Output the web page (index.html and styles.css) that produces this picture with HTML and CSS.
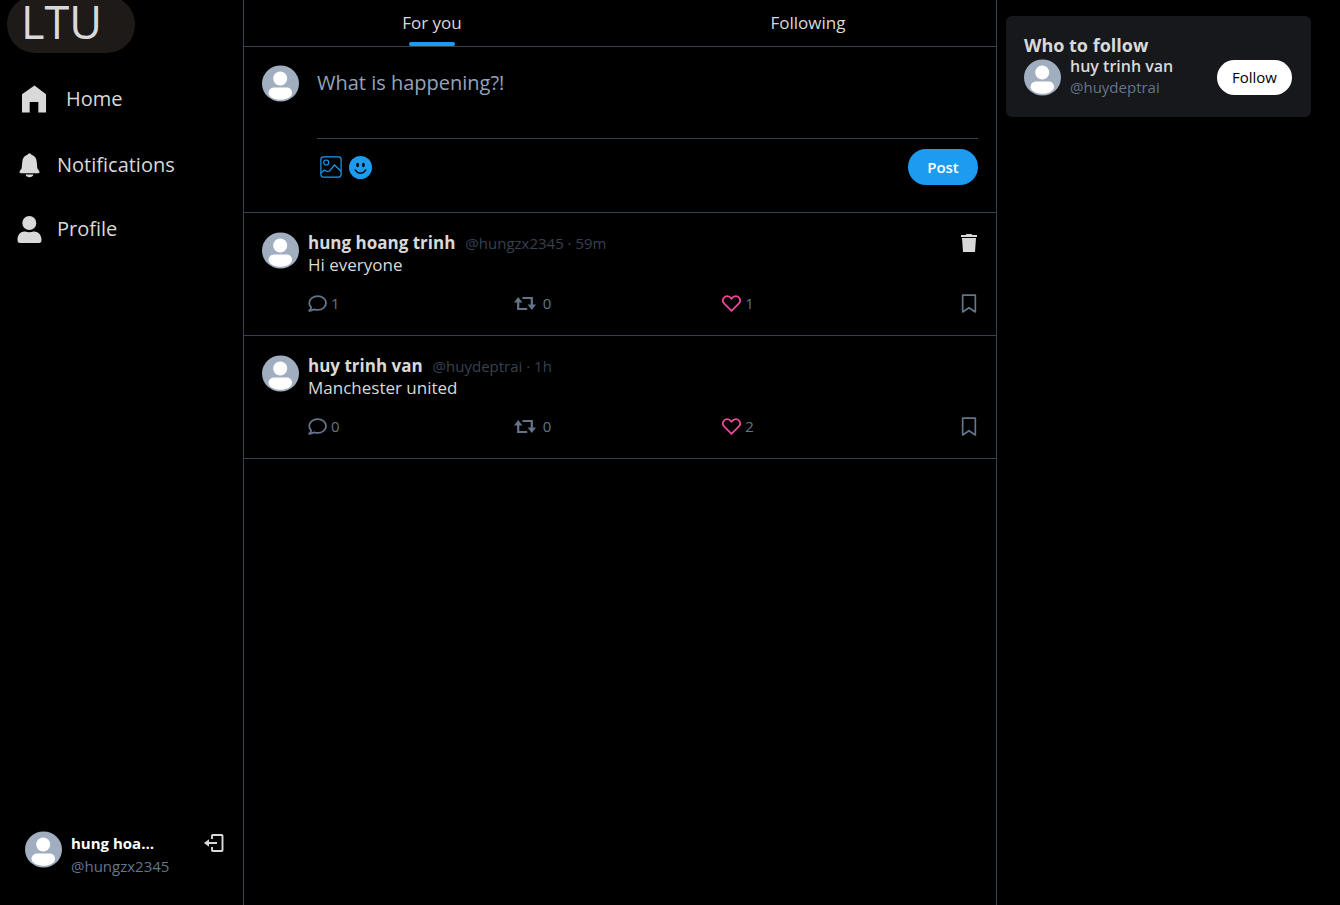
FILE: index.html
```html
<!DOCTYPE html>
<html lang="en">
<head>
<meta charset="utf-8">
<title>LTU</title>
<meta name="viewport" content="width=device-width, initial-scale=1">
<link rel="stylesheet" href="styles.css">
</head>
<body>
<svg class="sprite" aria-hidden="true">
  <symbol id="avatar" viewBox="0 0 37 36">
    <ellipse cx="18.5" cy="18" rx="18.5" ry="18" fill="#a0aec0"/>
    <circle cx="18.2" cy="13" r="7" fill="#fff"/>
    <path d="M13 22h11c4 0 6 2 6 5.500c0 4-6 6.800-11.500 6.800S6.500 31.500 6.500 27.500C6.500 24 9 22 13 22z" fill="#fff"/>
  </symbol>
  <symbol id="comment" viewBox="0 0 18 16">
    <path d="M9.200 1C4.800 1 1.200 3.900 1.200 7.500c0 1.600.7 3 1.800 4.100-.2 1.200-.9 2.400-1.900 3.400 1.800 0 3.400-.6 4.600-1.500 1.100.4 2.200.6 3.500.6 4.400 0 7.900-3 7.900-6.600S13.600 1 9.200 1z" fill="none" stroke="currentColor" stroke-width="1.700" stroke-linejoin="round"/>
  </symbol>
  <symbol id="repost" viewBox="0 0 22 15">
    <path d="M4.200 5v8h9M8.500 2h9.300v8" fill="none" stroke="currentColor" stroke-width="2.200"/>
    <path d="M0 6.500 4.200 1l4.200 5.500zM13.600 8.500H22L17.800 14z" fill="currentColor"/>
  </symbol>
  <symbol id="heart" viewBox="0 0 18 16">
    <path d="M9 15 2.200 8.200C.6 6.500.5 4 2 2.300s4.300-1.600 5.800 0L9 3.500l1.200-1.200c1.500-1.600 4.300-1.700 5.800 0s1.400 4.200-.2 5.900z" fill="none" stroke="currentColor" stroke-width="1.700" stroke-linejoin="round"/>
  </symbol>
  <symbol id="bookmark" viewBox="0 0 14 18">
    <path d="M1 1h12v16l-6-4-6 4z" fill="none" stroke="currentColor" stroke-width="1.600" stroke-linejoin="round"/>
  </symbol>
</svg>
<div class="app">
  <aside class="sidebar">
    <a class="brand" href="#">LTU</a>
    <nav class="menu">
      <a class="menu-item menu-home" href="#">
        <svg class="icon-home" viewBox="0 0 26 28"><path d="M13 0 25 9v19h-8V17H8v11H0V9z" fill="currentColor"/></svg>
        Home
      </a>
      <a class="menu-item" href="#">
        <svg class="icon-menu" viewBox="0 0 25 26"><path d="M12.500 1c1 0 1.700.5 2 1.300 3.200 1 5 3.600 5.200 7l.6 6.200c.2 1.500 2.200 2.700 2.200 4 0 .8-.5 1.200-1.300 1.200H3.800c-.8 0-1.300-.4-1.300-1.200 0-1.300 2-2.500 2.200-4l.6-6.200c.2-3.400 2-6 5.200-7 .3-.8 1-1.300 2-1.300zM8.500 22h8c-.5 1.700-2 2.800-4 2.800S9 23.700 8.500 22z" fill="currentColor"/></svg>
        Notifications
      </a>
      <a class="menu-item" href="#">
        <svg class="icon-menu" viewBox="0 0 25 27"><circle cx="12.300" cy="7" r="7" fill="currentColor"/><path d="M8 15.500c2.500 1 6 1 8.500 0 5-.3 8 3.500 8 8.500 0 2-.8 3-2.500 3H3c-1.700 0-2.500-1-2.500-3 0-5 2.500-8.800 7.500-8.500z" fill="currentColor"/></svg>
        Profile
      </a>
    </nav>
    <div class="account">
      <svg class="avatar"><use href="#avatar"/></svg>
      <div class="account-text">
        <strong class="account-name">hung hoang trinh</strong>
        <span class="handle">@hungzx2345</span>
      </div>
      <button class="icon-button" aria-label="Log out">
        <svg class="icon-logout" viewBox="0 0 20 18"><path d="M8 5V1.800Q8 1 8.800 1h8.900q.8 0 .8.800v14.400q0 .8-.8.800H8.800Q8 17 8 16.200V13M1.500 9H13" fill="none" stroke="currentColor" stroke-width="1.900"/><path d="M0 9l5-3.800v7.600z" fill="currentColor"/></svg>
      </button>
    </div>
  </aside>

  <main class="feed">
    <div class="tabs">
      <button class="tab tab-active">For you</button>
      <button class="tab">Following</button>
    </div>
    <form class="composer">
      <svg class="avatar"><use href="#avatar"/></svg>
      <div class="composer-body">
        <textarea class="composer-input" aria-label="Post text" placeholder="What is happening?!"></textarea>
        <div class="composer-tools">
          <button class="icon-button tool" type="button" aria-label="Add image">
            <svg class="icon-image" viewBox="0 0 22 22"><g fill="none" stroke="currentColor" stroke-width="1.200"><rect x=".9" y=".9" width="20.200" height="20.200" rx="2.500"/><circle cx="6.200" cy="6.500" r="2.500"/><path d="M1 17l3.300-3 2.500 1.500 2.600-.3L14.500 9l6.500 6.200"/></g></svg>
          </button>
          <button class="icon-button tool" type="button" aria-label="Add emoji">
            <svg class="icon-emoji" viewBox="0 0 23 23"><circle cx="11.500" cy="11.500" r="11.500" fill="currentColor"/><g fill="#000"><ellipse cx="8.600" cy="9" rx="1.400" ry="2.200"/><ellipse cx="14.400" cy="9" rx="1.400" ry="2.200"/></g><path d="M6.300 14c2.400 4.200 8 4.200 10.400 0" fill="none" stroke="#000" stroke-width="1.500" stroke-linecap="round"/></svg>
          </button>
          <button class="post-button" type="button">Post</button>
        </div>
      </div>
    </form>

    <article class="post">
      <svg class="avatar"><use href="#avatar"/></svg>
      <div class="post-body">
        <header class="post-head">
          <strong class="name">hung hoang trinh</strong>
          <span class="meta">@hungzx2345 · 59m</span>
          <button class="icon-button trash" aria-label="Delete post">
            <svg class="icon-trash" viewBox="0 0 16 18"><path d="M5.500 0h5l.8 1H16v2H0V1h4.700zM1 4h14l-1 14H2z" fill="currentColor"/></svg>
          </button>
        </header>
        <p class="post-text">Hi everyone</p>
        <div class="actions">
          <button class="action"><svg class="icon-small"><use href="#comment"/></svg>1</button>
          <button class="action action-repost"><svg class="icon-repost"><use href="#repost"/></svg>0</button>
          <button class="action"><svg class="icon-small liked"><use href="#heart"/></svg>1</button>
          <button class="action" aria-label="Bookmark"><svg class="icon-bookmark"><use href="#bookmark"/></svg></button>
        </div>
      </div>
    </article>

    <article class="post">
      <svg class="avatar"><use href="#avatar"/></svg>
      <div class="post-body">
        <header class="post-head">
          <strong class="name">huy trinh van</strong>
          <span class="meta">@huydeptrai · 1h</span>
        </header>
        <p class="post-text">Manchester united</p>
        <div class="actions">
          <button class="action"><svg class="icon-small"><use href="#comment"/></svg>0</button>
          <button class="action action-repost"><svg class="icon-repost"><use href="#repost"/></svg>0</button>
          <button class="action"><svg class="icon-small liked"><use href="#heart"/></svg>2</button>
          <button class="action" aria-label="Bookmark"><svg class="icon-bookmark"><use href="#bookmark"/></svg></button>
        </div>
      </div>
    </article>
  </main>

  <aside class="aside">
    <section class="suggest">
      <h2 class="suggest-title">Who to follow</h2>
      <div class="suggest-row">
        <svg class="avatar"><use href="#avatar"/></svg>
        <div class="suggest-text">
          <strong class="suggest-name">huy trinh van</strong>
          <span class="handle">@huydeptrai</span>
        </div>
        <button class="follow-button">Follow</button>
      </div>
    </section>
  </aside>
</div>
</body>
</html>
```
FILE: styles.css
```css
* { box-sizing: border-box; }

body {
  margin: 0;
  background: #000;
  color: #d9d9d9;
  font-family: "Segoe UI", "Open Sans", "Noto Sans", sans-serif;
  font-size: 17px;
  line-height: 22px;
}

a { color: inherit; text-decoration: none; }
svg { display: block; flex: none; }

button {
  margin: 0;
  padding: 0;
  border: 0;
  background: none;
  color: inherit;
  font: inherit;
  cursor: pointer;
}

.sprite { position: absolute; width: 0; height: 0; }

.app {
  display: grid;
  grid-template-columns: 243fr 754fr 343fr;
  min-height: 100vh;
}

.sidebar {
  display: flex;
  flex-direction: column;
  align-items: flex-start;
  min-width: 0;
  padding-bottom: 28px;
}

.brand {
  width: 128px;
  height: 57px;
  margin: -4px 0 0 7px;
  padding-left: 14px;
  border-radius: 28px;
  background: #1d1a17;
  font-size: 45px;
  line-height: 52px;
}

.menu {
  display: flex;
  flex-direction: column;
  gap: 36px;
  margin-top: 32px;
  padding-left: 17px;
}

.menu-item {
  display: flex;
  align-items: center;
  gap: 15px;
  height: 28px;
  font-size: 20px;
}

.menu-home { gap: 19px; margin-bottom: 2px; padding-left: 5px; }
.icon-home { width: 25px; height: 28px; }
.icon-menu { width: 25px; height: 27px; }

.account {
  display: flex;
  align-items: flex-start;
  gap: 9px;
  width: 100%;
  margin-top: auto;
  padding: 0 19px 0 25px;
}

.avatar { width: 37px; height: 37px; }

.account-text {
  display: flex;
  flex: 1;
  flex-direction: column;
  min-width: 0;
}

.account-name {
  max-width: 92px;
  overflow: hidden;
  color: #fff;
  font-size: 15px;
  line-height: 24px;
  text-overflow: ellipsis;
  white-space: nowrap;
}

.handle { color: #64748b; font-size: 15px; }

.icon-logout { width: 20px; height: 18px; margin-top: 3px; }

.feed {
  min-width: 0;
  border-right: 1px solid #374151;
  border-left: 1px solid #374151;
}

.tabs {
  display: grid;
  grid-template-columns: 1fr 1fr;
  border-bottom: 1px solid #374151;
}

.tab {
  display: grid;
  justify-items: center;
  height: 46px;
  padding-top: 12px;
  align-content: space-between;
}

.tab-active::after {
  width: 46px;
  height: 4px;
  border-radius: 2px;
  background: #1d9bf0;
  content: "";
}

.composer {
  display: flex;
  gap: 18px;
  padding: 18px 18px 27px;
  border-bottom: 1px solid #374151;
}

.composer-body { flex: 1; min-width: 0; }

.composer-input {
  display: block;
  width: 100%;
  height: 74px;
  padding: 4px 0;
  border: 0;
  border-bottom: 1px solid #374151;
  outline: 0;
  background: transparent;
  color: #d9d9d9;
  font: 20px/28px "Segoe UI", "Open Sans", "Noto Sans", sans-serif;
  resize: none;
}

.composer-input::placeholder { color: #94a3b8; opacity: 1; }

.composer-tools {
  display: flex;
  align-items: center;
  gap: 7px;
  margin-top: 10px;
  padding-left: 3px;
}

.tool { color: #1d9bf0; }
.icon-image { width: 22px; height: 22px; }
.icon-emoji { width: 23px; height: 23px; }

.post-button {
  width: 70px;
  height: 36px;
  margin-left: auto;
  border-radius: 18px;
  background: #1d9bf0;
  color: #fff;
  font-size: 15px;
  font-weight: 600;
}

.post {
  display: flex;
  gap: 9px;
  padding: 19px 18px 21px;
  border-bottom: 1px solid #374151;
}

.post-body { flex: 1; min-width: 0; }

.post-head {
  display: flex;
  align-items: center;
  gap: 10px;
  height: 22px;
}

.name { font-weight: 700; }
.meta { color: #374151; font-size: 15px; }
.trash { margin-left: auto; }
.icon-trash { width: 18px; height: 18px; }
.post-text { margin: 0; }

.actions {
  display: grid;
  grid-template-columns: 206fr 209fr 238fr auto;
  margin-top: 16px;
  color: #64748b;
}

.action {
  display: flex;
  align-items: center;
  gap: 4px;
  font-size: 15px;
}

.action-repost { gap: 7px; }
.icon-small { width: 19px; height: 17px; }
.icon-repost { width: 22px; height: 15px; }
.icon-bookmark { width: 18px; height: 19px; }
.liked { color: #ec4899; }

.aside { min-width: 0; padding: 16px 29px 0 9px; }

.suggest {
  padding: 18px 19px 19px 18px;
  border-radius: 6px;
  background: #16181c;
}

.suggest-title {
  margin: 0;
  font-size: 18px;
  font-weight: 700;
  line-height: 22px;
}

.suggest-row { display: flex; align-items: center; gap: 9px; }

.suggest-text {
  display: flex;
  flex: 1;
  flex-direction: column;
  min-width: 0;
}

.suggest-name { font-size: 16px; font-weight: 600; line-height: 20px; }

.follow-button {
  width: 75px;
  height: 35px;
  border-radius: 18px;
  background: #fff;
  color: #000;
  font-size: 15px;
}
```
